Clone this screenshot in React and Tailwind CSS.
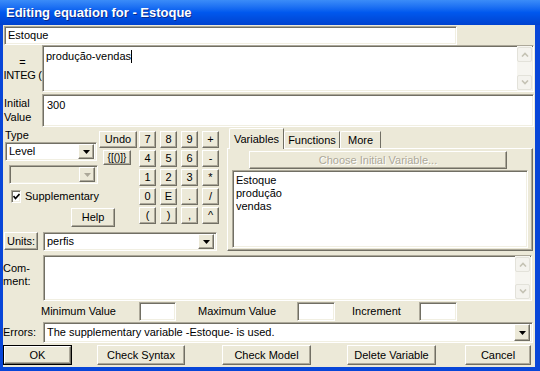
import React from 'react';

const sunken =
  'border border-t-[#aca899] border-l-[#aca899] border-r-white border-b-white shadow-[inset_1px_1px_0_#716f64,inset_-1px_-1px_0_#f1efe2]';
const raised =
  'border border-t-white border-l-white border-r-[#716f64] border-b-[#716f64] shadow-[inset_-1px_-1px_0_#aca899]';

function Btn({ className = '', children }) {
  return (
    <div className={`${raised} bg-[#ece9d8] flex items-center justify-center leading-none ${className}`}>
      {children}
    </div>
  );
}

function DownArrow({ color = '#000' }) {
  return (
    <svg width="7" height="4" viewBox="0 0 7 4">
      <polygon points="0,0 7,0 3.5,4" fill={color} />
    </svg>
  );
}

function ArrowBtn({ disabled, className = '' }) {
  return (
    <Btn className={`w-[16px] ${className}`}>
      <DownArrow color={disabled ? '#aca899' : '#000'} />
    </Btn>
  );
}

function ScrollBtn({ up }) {
  return (
    <div className="w-[15px] h-[15px] rounded-[2px] border border-[#e3e2da] bg-[#f4f3ee] flex items-center justify-center">
      <svg width="8" height="5" viewBox="0 0 8 5">
        <path
          d={up ? 'M1 4.5 L4 1.5 L7 4.5' : 'M1 0.5 L4 3.5 L7 0.5'}
          stroke="#c4c2b4"
          strokeWidth="1.6"
          fill="none"
        />
      </svg>
    </div>
  );
}

function ScrollBar() {
  return (
    <div className="w-[15px] flex flex-col justify-between bg-[#f6f5f0] py-[1px] mr-[1px]">
      <ScrollBtn up />
      <ScrollBtn />
    </div>
  );
}

function Field({ className = '' }) {
  return <div className={`${sunken} bg-white h-[19px] ${className}`} />;
}

export default function App() {
  return (
    <div className="w-[540px] h-[371px] flex flex-col bg-[#0846d8] font-['Liberation_Sans',Arial,sans-serif] text-[11px] text-black">
      {/* title bar */}
      <div className="h-[25px] shrink-0 bg-linear-to-b from-[#3b8cf8] via-[#0058ee] to-[#0042cf] flex items-center pl-[6px]">
        <span className="text-white font-bold text-[13px] [text-shadow:1px_1px_0_#0c2b8c]">
          Editing equation for - Estoque
        </span>
      </div>

      <div className="flex-1 flex pl-[3px] pr-[5px] pb-[4px]">
        <div className="flex-1 bg-[#ece9d8] flex flex-col">
          {/* name */}
          <div className="h-[20px] pt-[1px] pl-[1px] flex">
            <div className={`${sunken} bg-white w-[453px] h-[19px] pl-[3px] leading-[17px]`}>Estoque</div>
          </div>

          {/* equation */}
          <div className="flex h-[47px]">
            <div className="w-[39px] flex flex-col items-center justify-center leading-[13px] pt-[1px] whitespace-nowrap">
              <span>=</span>
              <span className="tracking-[-0.3px]">INTEG (</span>
            </div>
            <div className={`${sunken} bg-white w-[492px] flex`}>
              <div className="flex-1 pl-[3px] pt-[4px] leading-[13px]">
                produção-vendas<span className="inline-block w-[1px] h-[13px] bg-black align-top" />
              </div>
              <ScrollBar />
            </div>
          </div>

          {/* initial value */}
          <div className="flex h-[33px] mt-[2px]">
            <div className="w-[39px] pl-[1px] pt-[2px] leading-[14px]">
              Initial
              <br />
              Value
            </div>
            <div className={`${sunken} bg-white w-[492px] pl-[4px] pt-[4px] leading-[13px]`}>300</div>
          </div>

          {/* middle block */}
          <div className="flex h-[123px] mt-[1px]">
            <div className="w-[224px] flex flex-col">
              <div className="flex">
                <div className="w-[134px] flex flex-col">
                  <div className="flex">
                    <div className="w-[96px] flex flex-col">
                      <div className="pl-[2px] h-[14px] leading-[14px]">Type</div>
                      <div className={`${sunken} bg-white ml-[2px] w-[92px] h-[19px] flex items-center justify-between pl-[3px] pr-[2px]`}>
                        <span>Level</span>
                        <ArrowBtn className="h-[15px]" />
                      </div>
                      <div className={`${sunken} bg-[#ece9d8] ml-[6px] mt-[4px] w-[89px] h-[19px] flex items-center justify-end pr-[2px]`}>
                        <ArrowBtn disabled className="h-[15px]" />
                      </div>
                      <div className="flex items-center mt-[6px] ml-[8px] h-[13px]">
                        <div className={`${sunken} bg-white w-[13px] h-[13px] flex items-center justify-center`}>
                          <svg width="7" height="7" viewBox="0 0 7 7">
                            <polyline points="0.5,3 2.5,5.5 6.5,1" stroke="#000" strokeWidth="1.7" fill="none" />
                          </svg>
                        </div>
                        <span className="ml-[4px]">Supplementary</span>
                      </div>
                    </div>
                    <div className="w-[38px] flex flex-col pt-[3px]">
                      <Btn className="w-[38px] h-[17px]">Undo</Btn>
                      <Btn className="w-[28px] h-[15px] ml-[4px] mt-[2px] text-[10px]">{'{[()]}'}</Btn>
                    </div>
                  </div>
                  <Btn className="ml-[68px] mt-[5px] w-[44px] h-[19px]">Help</Btn>
                </div>
                <div className="ml-[2px] pt-[3px] grid grid-cols-[repeat(4,17px)] auto-rows-[17px] gap-x-[4px] gap-y-[2px]">
                  {['7', '8', '9', '+', '4', '5', '6', '-', '1', '2', '3', '*', '0', 'E', '.', '/', '(', ')', ',', '^'].map(
                    (k) => (
                      <Btn key={k} className="w-[17px] h-[17px]">
                        {k}
                      </Btn>
                    )
                  )}
                </div>
              </div>
              {/* units */}
              <div className="flex mt-[5px]">
                <Btn className="ml-[1px] w-[34px] h-[18px]">Units:</Btn>
                <div className={`${sunken} bg-white ml-[5px] w-[174px] h-[19px] flex items-center justify-between pl-[3px] pr-[2px]`}>
                  <span>perfis</span>
                  <ArrowBtn className="h-[15px]" />
                </div>
              </div>
            </div>

            {/* tab panel */}
            <div className="w-[306px] flex flex-col">
              <div className="h-[20px] flex items-end pl-[2px]">
                <div className="relative z-10 -mb-[1px] w-[55px] h-[21px] bg-[#ece9d8] border-t border-l border-white border-r border-r-[#716f64] rounded-tl-[2px] flex items-center justify-center">
                  Variables
                </div>
                <div className="w-[56px] h-[17px] border-t border-l border-white border-r border-r-[#716f64] rounded-tl-[2px] flex items-center justify-center">
                  Functions
                </div>
                <div className="w-[41px] h-[17px] border-t border-l border-white border-r border-r-[#716f64] rounded-tl-[2px] flex items-center justify-center">
                  More
                </div>
              </div>
              <div className="flex-1 border border-t-white border-l-white border-r-[#716f64] border-b-[#716f64] shadow-[inset_-1px_-1px_0_#aca899] flex flex-col">
                <Btn className="mt-[2px] ml-[21px] w-[258px] h-[18px] text-[#aca899] [text-shadow:1px_1px_0_#fff]">
                  Choose Initial Variable...
                </Btn>
                <div className={`${sunken} bg-white mt-[1px] ml-[4px] mb-[2px] w-[296px] flex-1 pl-[3px] pt-[3px] leading-[13px]`}>
                  <div>Estoque</div>
                  <div>produção</div>
                  <div>vendas</div>
                </div>
              </div>
            </div>
          </div>

          {/* comment */}
          <div className="flex h-[46px] mt-[4px]">
            <div className="w-[40px] pt-[7px] leading-[13px]">
              Com-
              <br />
              ment:
            </div>
            <div className={`${sunken} bg-white w-[489px] flex`}>
              <div className="flex-1" />
              <ScrollBar />
            </div>
          </div>

          {/* min / max / increment */}
          <div className="flex h-[19px] mt-[1px] items-center">
            <span className="ml-[38px] w-[98px]">Minimum Value</span>
            <Field className="w-[37px]" />
            <span className="ml-[22px] w-[99px]">Maximum Value</span>
            <Field className="w-[38px]" />
            <span className="ml-[17px] w-[67px]">Increment</span>
            <Field className="w-[38px]" />
          </div>

          {/* errors */}
          <div className="flex h-[21px] mt-[1px] items-center">
            <span className="w-[40px]">Errors:</span>
            <div className={`${sunken} bg-white w-[490px] h-[21px] flex items-center justify-between pl-[3px] pr-[2px]`}>
              <span>The supplementary variable -Estoque- is used.</span>
              <ArrowBtn className="h-[17px]" />
            </div>
          </div>

          {/* buttons */}
          <div className="flex h-[20px] mt-[2px]">
            <div className="w-[69px] h-[20px] border border-black">
              <Btn className="w-full h-full">OK</Btn>
            </div>
            <Btn className="ml-[25px] w-[88px] h-[20px]">Check Syntax</Btn>
            <Btn className="ml-[37px] w-[89px] h-[20px]">Check Model</Btn>
            <Btn className="ml-[36px] w-[89px] h-[20px]">Delete Variable</Btn>
            <Btn className="ml-[29px] w-[66px] h-[20px]">Cancel</Btn>
          </div>
        </div>
      </div>
    </div>
  );
}
